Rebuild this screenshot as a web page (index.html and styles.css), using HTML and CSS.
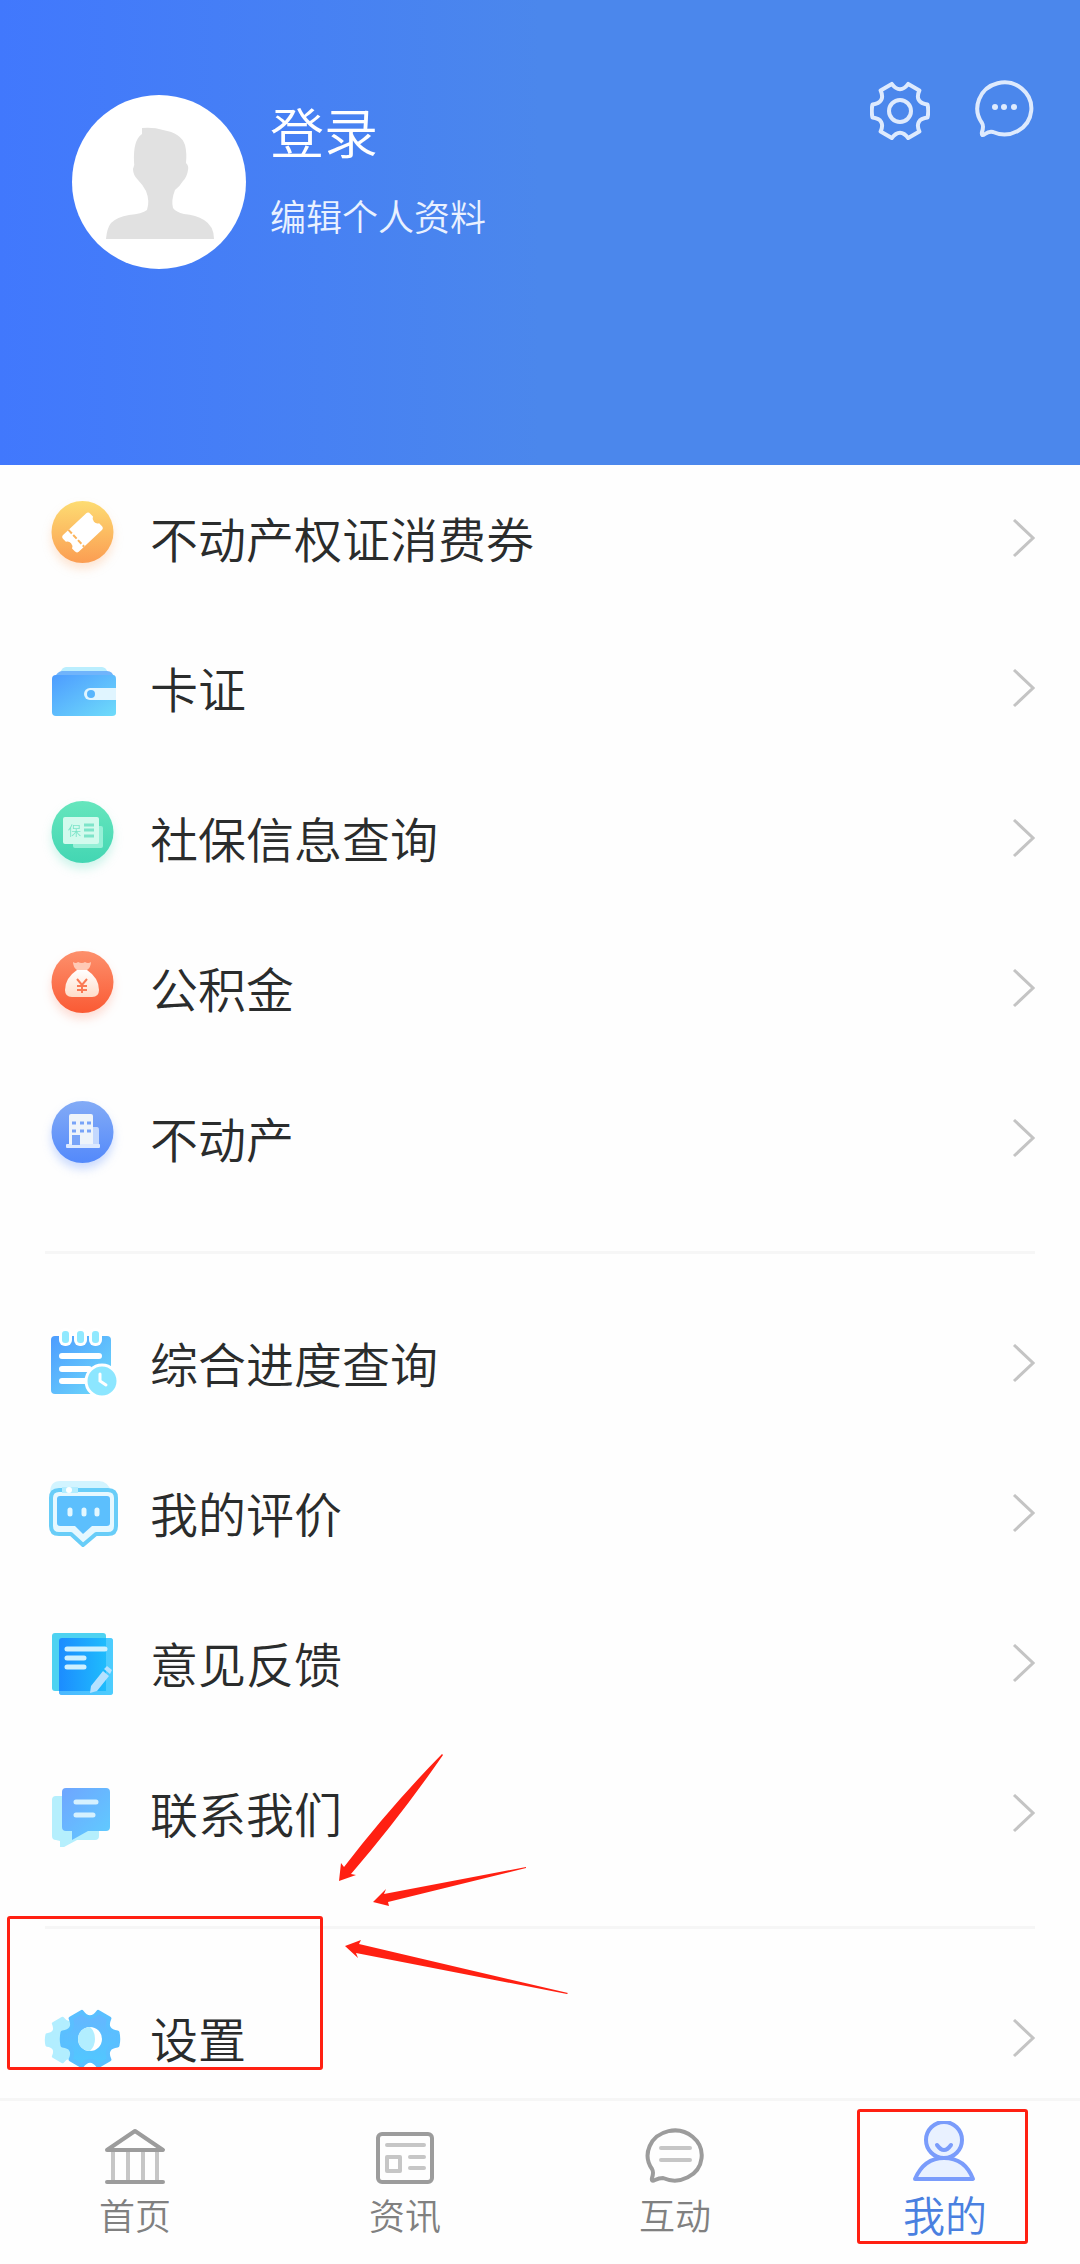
FILE: index.html
```html
<!DOCTYPE html>
<html lang="zh-CN">
<head>
    <meta charset="UTF-8">
    <meta name="viewport" content="width=device-width, initial-scale=1.0">
    <title>我的</title>
    <link rel="stylesheet" href="styles.css">
</head>
<body>
    <!-- Shared shapes and gradients -->
    <svg class="defs" width="0" height="0" aria-hidden="true">
        <defs>
            <path id="gear" d="M27.5 6.5C18.8 7.4 15.8 12.6 19.4 20.6L8.2 27.1C3 20 -3 20 -8.2 27.1L-19.4 20.6C-15.8 12.6 -18.8 7.4 -27.5 6.5Q-29 0 -27.5 -6.5C-18.8 -7.4 -15.8 -12.6 -19.4 -20.6L-8.2 -27.1C-3 -20 3 -20 8.2 -27.1L19.4 -20.6C15.8 -12.6 18.8 -7.4 27.5 -6.5Q29 0 27.5 6.5Z"/>
            <path id="chevron" d="M2 1L21 19L2 37"/>
            <linearGradient id="orange" x1="0" y1="0" x2="0" y2="1"><stop offset="0" stop-color="#fddc72"/><stop offset="1" stop-color="#fb9d52"/></linearGradient>
            <linearGradient id="green" x1="0" y1="0" x2="0" y2="1"><stop offset="0" stop-color="#66e6bd"/><stop offset="1" stop-color="#43d6b3"/></linearGradient>
            <linearGradient id="red" x1="0" y1="0" x2="0" y2="1"><stop offset="0" stop-color="#fd906c"/><stop offset="1" stop-color="#fa5a34"/></linearGradient>
            <linearGradient id="blue" x1="0" y1="0" x2="0" y2="1"><stop offset="0" stop-color="#83abf6"/><stop offset="1" stop-color="#5389fb"/></linearGradient>
            <linearGradient id="sky" x1="0" y1="0" x2="1" y2="1"><stop offset="0" stop-color="#4d9cff"/><stop offset="1" stop-color="#6fdcfa"/></linearGradient>
            <linearGradient id="sky2" x1="0" y1="0" x2="1" y2="1"><stop offset="0" stop-color="#6fa5ff"/><stop offset="1" stop-color="#5fcdff"/></linearGradient>
            <linearGradient id="deep" x1="0" y1="0" x2="1" y2="0"><stop offset="0" stop-color="#1c8cff"/><stop offset="1" stop-color="#1fc3fc"/></linearGradient>
            <linearGradient id="bag" x1="0" y1="0" x2="0" y2="1"><stop offset="0" stop-color="#fff"/><stop offset="1" stop-color="#ffdcc8"/></linearGradient>
            <linearGradient id="cog" x1="0" y1="0" x2="0" y2="1"><stop offset="0" stop-color="#66b5ff"/><stop offset="1" stop-color="#4fc9ff"/></linearGradient>
        </defs>
    </svg>

    <header class="header">
        <a class="profile" href="#">
            <svg class="avatar" viewBox="0 0 174 174">
                <circle cx="87" cy="87" r="87" fill="#fff"/>
                <path fill="#e1e1e1" d="M70 33Q82 32 91 35Q109 38 113 50Q115 58 114 68Q117 71 116 75Q115 82 111 86Q108 91 103 95Q99 105 101 113Q104 117 112 119Q124 120 132 125Q142 131 142 144H34Q35 133 39 128Q45 122 57 120Q70 119 75 115Q78 106 74 96Q71 90 66 85Q61 80 61 74Q63 70 62 67Q61 45 70 39Z"/>
            </svg>
            <span class="profile-text">
                <span class="profile-name">登录</span>
                <span class="profile-edit">编辑个人资料</span>
            </span>
        </a>
        <div class="header-actions">
            <button class="icon-button" type="button" aria-label="设置">
                <svg viewBox="0 0 60 60">
                    <use href="#gear" transform="translate(30 31)"/>
                    <circle cx="30" cy="31" r="11"/>
                </svg>
            </button>
            <button class="icon-button" type="button" aria-label="消息">
                <svg viewBox="0 0 60 60">
                    <path d="M7 43A27 26 0 1 1 18 52Q14 51 10 54Q6 57 7 52Q9 46 7 43Z"/>
                    <g class="dots"><circle cx="20" cy="27" r="3"/><circle cx="29" cy="27" r="3"/><circle cx="39" cy="27" r="3"/></g>
                </svg>
            </button>
        </div>
    </header>

    <main class="menu">
        <div class="menu-group">
            <a class="menu-item" href="#">
                <svg class="menu-icon glow-orange" viewBox="0 0 80 80">
                    <circle cx="37.5" cy="32" r="31" fill="url(#orange)"/>
                    <g transform="rotate(-43 37.5 32.5)">
                        <path fill="#fff" d="M22 21H53Q56 21 56 24V28A5 5 0 0 0 56 37V41Q56 44 53 44H22Q19 44 19 41V37A5 5 0 0 0 19 28V24Q19 21 22 21Z"/>
                        <path d="M29 21V44" stroke="#fbb45c" stroke-width="2" stroke-dasharray="5 2"/>
                    </g>
                </svg>
                <span class="menu-label">不动产权证消费券</span>
                <svg class="chevron" viewBox="0 0 23 42"><use href="#chevron"/></svg>
            </a>
            <a class="menu-item" href="#">
                <svg class="menu-icon" viewBox="0 0 80 80">
                    <path fill="#baeefe" d="M21 17H57Q61 17 63 23H15Q17 17 21 17Z"/>
                    <path fill="#70b4fb" d="M17 21H62Q68 21 69 28H9Q13 21 17 21Z"/>
                    <path fill="url(#sky)" d="M11 25H68Q71 25 71 29V63Q71 66 67 66H11Q7 66 7 62V29Q7 25 11 25Z"/>
                    <path fill="#e0f5ff" d="M71 38H45A6 6 0 0 0 45 50H71Z"/>
                    <circle cx="46" cy="44" r="4" fill="#57b5fd"/>
                </svg>
                <span class="menu-label">卡证</span>
                <svg class="chevron" viewBox="0 0 23 42"><use href="#chevron"/></svg>
            </a>
            <a class="menu-item" href="#">
                <svg class="menu-icon glow-green" viewBox="0 0 80 80">
                    <circle cx="37.5" cy="32" r="31" fill="url(#green)"/>
                    <rect x="28" y="26" width="30" height="22" rx="2" fill="#96f0d7"/>
                    <rect x="18" y="17" width="36" height="27" rx="2" fill="#d2faed"/>
                    <text class="card-text" x="23" y="35">保</text>
                    <path d="M39 25H49M39 30H49M39 36H49" stroke="#7de4c9" stroke-width="3"/>
                </svg>
                <span class="menu-label">社保信息查询</span>
                <svg class="chevron" viewBox="0 0 23 42"><use href="#chevron"/></svg>
            </a>
            <a class="menu-item" href="#">
                <svg class="menu-icon glow-red" viewBox="0 0 80 80">
                    <circle cx="37.5" cy="32" r="31" fill="url(#red)"/>
                    <path fill="#ffc9b5" d="M28 12Q31 14 33 12Q37 14 40 12Q43 14 46 12Q46 17 42 20H32Q28 17 28 12Z"/>
                    <path fill="url(#bag)" d="M32 20H42Q54 28 54 40Q54 47 47 47H27Q20 47 20 40Q20 28 32 20Z"/>
                    <path d="M32 29L37 35L42 29M37 35V43M32 36H42M32 40H42" fill="none" stroke="#fa7a55" stroke-width="2"/>
                </svg>
                <span class="menu-label">公积金</span>
                <svg class="chevron" viewBox="0 0 23 42"><use href="#chevron"/></svg>
            </a>
            <a class="menu-item" href="#">
                <svg class="menu-icon glow-blue" viewBox="0 0 80 80">
                    <circle cx="37.5" cy="32" r="31" fill="url(#blue)"/>
                    <path fill="#c3d8fe" d="M48 27H52Q54 27 54 30V45H48Z"/>
                    <rect x="24" y="14" width="24" height="32" rx="2" fill="#eef4fa"/>
                    <rect x="21" y="44" width="34" height="4" rx="1" fill="#dce9ff"/>
                    <path d="M27 23H31M35 23H39M42 23H46M27 31H31M35 31H39M42 31H46" stroke="#78a4f8" stroke-width="3"/>
                    <rect x="27" y="35" width="8" height="10" fill="#78a4f8"/>
                </svg>
                <span class="menu-label">不动产</span>
                <svg class="chevron" viewBox="0 0 23 42"><use href="#chevron"/></svg>
            </a>
        </div>

        <div class="menu-group">
            <a class="menu-item" href="#">
                <svg class="menu-icon" viewBox="0 0 80 80">
                    <rect x="6" y="11" width="60" height="58" rx="4" fill="url(#sky)"/>
                    <g fill="#fff">
                        <rect x="14" y="3" width="13" height="18" rx="6"/>
                        <rect x="29" y="3" width="13" height="18" rx="6"/>
                        <rect x="44" y="3" width="13" height="18" rx="6"/>
                    </g>
                    <g fill="#90e9ff">
                        <rect x="17" y="6" width="7" height="12" rx="3"/>
                        <rect x="32" y="6" width="7" height="12" rx="3"/>
                        <rect x="47" y="6" width="7" height="12" rx="3"/>
                    </g>
                    <path d="M17 31H54M17 44H44M17 56H42" stroke="#fff" stroke-width="6" stroke-linecap="round"/>
                    <circle cx="57" cy="56" r="16" fill="#8ce6ff" stroke="#fff" stroke-width="3"/>
                    <path d="M55 49V56L61 60" fill="none" stroke="#fff" stroke-width="3" stroke-linecap="round"/>
                </svg>
                <span class="menu-label">综合进度查询</span>
                <svg class="chevron" viewBox="0 0 23 42"><use href="#chevron"/></svg>
            </a>
            <a class="menu-item" href="#">
                <svg class="menu-icon" viewBox="0 0 80 80">
                    <path fill="#d2f4ff" d="M15 6H54Q63 6 67 18H5Q5 6 15 6Z"/>
                    <path fill="#e6f8ff" stroke="#68cdf8" stroke-width="4" stroke-linejoin="round" d="M14 15H63Q71 15 71 23V51Q71 59 63 59H51L38 70L26 59H14Q6 59 6 51V23Q6 15 14 15Z"/>
                    <path d="M17 15H33" stroke="#b4edff" stroke-width="6"/>
                    <circle cx="24" cy="15" r="3" fill="#fff"/>
                    <path fill="#5cbffd" d="M15 21H62Q65 21 65 24V48Q65 51 62 51H47L38 59L30 51H15Q12 51 12 48V24Q12 21 15 21Z"/>
                    <path d="M25 35V39M39 35V39M52 35V39" stroke="#e4f8ff" stroke-width="5" stroke-linecap="round"/>
                </svg>
                <span class="menu-label">我的评价</span>
                <svg class="chevron" viewBox="0 0 23 42"><use href="#chevron"/></svg>
            </a>
            <a class="menu-item" href="#">
                <svg class="menu-icon" viewBox="0 0 80 80">
                    <rect x="7" y="8" width="54" height="58" rx="3" fill="#4ed2f1"/>
                    <rect x="14" y="13" width="54" height="57" rx="3" fill="url(#deep)"/>
                    <path fill="#6ad3ff" opacity=".6" d="M61 13H65Q68 13 68 16V67Q68 70 65 70H17Q14 70 14 66H61Z"/>
                    <path d="M22 24H60M22 33H39M22 42H39" stroke="#cdf0ff" stroke-width="5" stroke-linecap="round"/>
                    <path fill="#b5e1ff" d="M58 46L64 51L52 66L45 68L46 61ZM59 44L62 41L67 45L65 49Z"/>
                </svg>
                <span class="menu-label">意见反馈</span>
                <svg class="chevron" viewBox="0 0 23 42"><use href="#chevron"/></svg>
            </a>
            <a class="menu-item" href="#">
                <svg class="menu-icon" viewBox="0 0 80 80">
                    <path fill="#b5effd" d="M11 21H50Q54 21 54 25V61Q54 65 50 65H32L19 72H15V66L11 65Q7 65 7 61V25Q7 21 11 21Z"/>
                    <path fill="url(#sky2)" d="M21 13H61Q65 13 65 17V52Q65 56 61 56H43L27 65V56H21Q17 56 17 52V17Q17 13 21 13Z"/>
                    <path d="M31 27H51M31 40H48" stroke="#d5f1ff" stroke-width="5" stroke-linecap="round"/>
                </svg>
                <span class="menu-label">联系我们</span>
                <svg class="chevron" viewBox="0 0 23 42"><use href="#chevron"/></svg>
            </a>
        </div>

        <div class="menu-group">
            <a class="menu-item" href="#">
                <svg class="menu-icon" viewBox="0 0 80 80">
                    <use href="#gear" transform="translate(24 40) scale(.8)" fill="#b2eeff" stroke="#b2eeff" stroke-width="4" stroke-linejoin="round"/>
                    <use href="#gear" transform="translate(45 39)" fill="url(#cog)" stroke="#5abfff" stroke-width="4" stroke-linejoin="round"/>
                    <circle cx="45" cy="39" r="12" fill="#fff"/>
                    <path fill="#b2eeff" d="M45 27A12 12 0 0 0 45 51Q50 46 50 39Q50 31 45 27Z"/>
                </svg>
                <span class="menu-label">设置</span>
                <svg class="chevron" viewBox="0 0 23 42"><use href="#chevron"/></svg>
                <span class="mark mark-settings"></span>
                <svg class="arrows" viewBox="0 0 250 250">
                    <path d="M9 136L11 118L14 122Q60 62 112 9L113 10Q70 72 21 129L26 130Z"/>
                    <path d="M43 157L56 144L54 149L196 122L196 123L58 157L59 161Z"/>
                    <path d="M15 201L31 195L29 199L238 248L237 249L26 208L28 213Z"/>
                </svg>
            </a>
        </div>
    </main>

    <nav class="tabbar">
        <a class="tab" href="#">
            <svg viewBox="0 0 64 64">
                <path class="soft" d="M10 31V60M25 31V60M40 31V60M54 31V60"/>
                <path d="M4 29L32 10L60 29ZM4 61H60"/>
            </svg>
            <span>首页</span>
        </a>
        <a class="tab" href="#">
            <svg viewBox="0 0 64 64">
                <path class="soft" d="M14 24H51M37 36H51M37 47H51M14 36H27V50H14Z"/>
                <rect x="5" y="13" width="54" height="48" rx="4"/>
            </svg>
            <span>资讯</span>
        </a>
        <a class="tab" href="#">
            <svg viewBox="0 0 64 64">
                <path class="soft" d="M18 27H47M18 39H47"/>
                <path d="M9 48A27 25 0 1 1 20 57Q16 57 12 59Q8 61 9 57Q11 51 9 48Z"/>
            </svg>
            <span>互动</span>
        </a>
        <a class="tab active" href="#">
            <svg viewBox="0 0 64 64">
                <circle cx="31" cy="19" r="18"/>
                <path d="M2 58Q11 37 31 37Q52 37 60 58Z"/>
                <path d="M24 24Q31 34 38 24"/>
            </svg>
            <span>我的</span>
            <span class="mark mark-tab"></span>
        </a>
    </nav>
</body>
</html>
```

FILE: styles.css
```css
:root {
    --primary-color: #4b87ec;
    --text-color: #2a2c2c;
    --muted-color: #808080;
    --line-color: #f6f6f6;
    --mark-color: #ff2012;
}

* {
    margin: 0;
    padding: 0;
    box-sizing: border-box;
}

body {
    display: flex;
    flex-direction: column;
    height: 100vh;
    overflow: hidden;
    font-family: 'Noto Sans CJK SC', sans-serif;
    font-weight: 350;
    background: #fefefe;
    color: var(--text-color);
}

a {
    color: inherit;
    text-decoration: none;
}

.defs {
    position: absolute;
}

/* Header */
.header {
    display: flex;
    justify-content: space-between;
    align-items: flex-start;
    flex-shrink: 0;
    height: 465px;
    padding: 80px 45px 0 72px;
    background: linear-gradient(90deg, #4178fd 0%, var(--primary-color) 50%);
    color: #fff;
}

.profile {
    display: flex;
    gap: 24px;
    padding-top: 15px;
}

.avatar {
    width: 174px;
    height: 174px;
}

.profile-text {
    display: flex;
    flex-direction: column;
    gap: 18px;
}

.profile-name {
    font-size: 54px;
    line-height: 72px;
}

.profile-edit {
    font-size: 36px;
    line-height: 60px;
    color: #e9f1ff;
}

.header-actions {
    display: flex;
    gap: 45px;
}

.icon-button {
    width: 60px;
    height: 60px;
    border: none;
    background: none;
    cursor: pointer;
}

.icon-button svg {
    display: block;
    width: 60px;
    height: 60px;
    fill: none;
    stroke: #deeafd;
    stroke-width: 4;
    stroke-linejoin: round;
}

.icon-button .dots {
    fill: #deeafd;
    stroke: none;
}

/* Menu list */
.menu {
    flex: 1;
    min-height: 0;
    overflow: hidden;
}

.menu-group + .menu-group::before {
    content: '';
    display: block;
    height: 3px;
    margin: 36px 45px;
    background: var(--line-color);
}

.menu-item {
    position: relative;
    display: flex;
    align-items: center;
    gap: 25px;
    height: 150px;
    padding: 0 45px;
}

.menu-icon {
    width: 80px;
    height: 80px;
    overflow: visible;
}

.glow-orange {
    filter: drop-shadow(0 6px 5px rgba(251, 157, 82, 0.25));
}

.glow-green {
    filter: drop-shadow(0 6px 5px rgba(67, 214, 179, 0.25));
}

.glow-red {
    filter: drop-shadow(0 6px 5px rgba(250, 90, 52, 0.2));
}

.glow-blue {
    filter: drop-shadow(0 6px 5px rgba(83, 137, 251, 0.3));
}

.card-text {
    font-size: 13px;
    fill: #7de4c9;
}

.menu-label {
    flex: 1;
    padding-bottom: 6px;
    font-size: 48px;
    line-height: 72px;
}

.chevron {
    width: 23px;
    height: 42px;
    fill: none;
    stroke: #c4c4c4;
    stroke-width: 3;
}

/* Tab bar */
.tabbar {
    display: flex;
    flex-shrink: 0;
    border-top: 3px solid var(--line-color);
    background: #fefefe;
}

.tab {
    position: relative;
    flex: 1;
    display: flex;
    flex-direction: column;
    align-items: center;
    gap: 5px;
    padding: 20px 0 26px;
    font-size: 36px;
    line-height: 48px;
    color: var(--muted-color);
}

.tab svg {
    width: 64px;
    height: 64px;
    fill: none;
    stroke: #9c9c9c;
    stroke-width: 4;
    stroke-linecap: round;
    stroke-linejoin: round;
}

.tab .soft {
    stroke: #c6c6c6;
}

.tab.active {
    font-size: 42px;
    color: #4a80e0;
}

.tab.active svg {
    fill: #e9f1ff;
    stroke: #7a9cfb;
}

/* Red guide marks */
.mark {
    position: absolute;
    border: 3px solid var(--mark-color);
    border-radius: 3px;
}

.mark-settings {
    top: -49px;
    left: 7px;
    width: 316px;
    height: 154px;
}

.mark-tab {
    top: 8px;
    left: 50%;
    width: 171px;
    height: 135px;
    margin-left: -88px;
}

.arrows {
    position: absolute;
    top: -220px;
    left: 330px;
    width: 250px;
    height: 250px;
    fill: var(--mark-color);
}
```
